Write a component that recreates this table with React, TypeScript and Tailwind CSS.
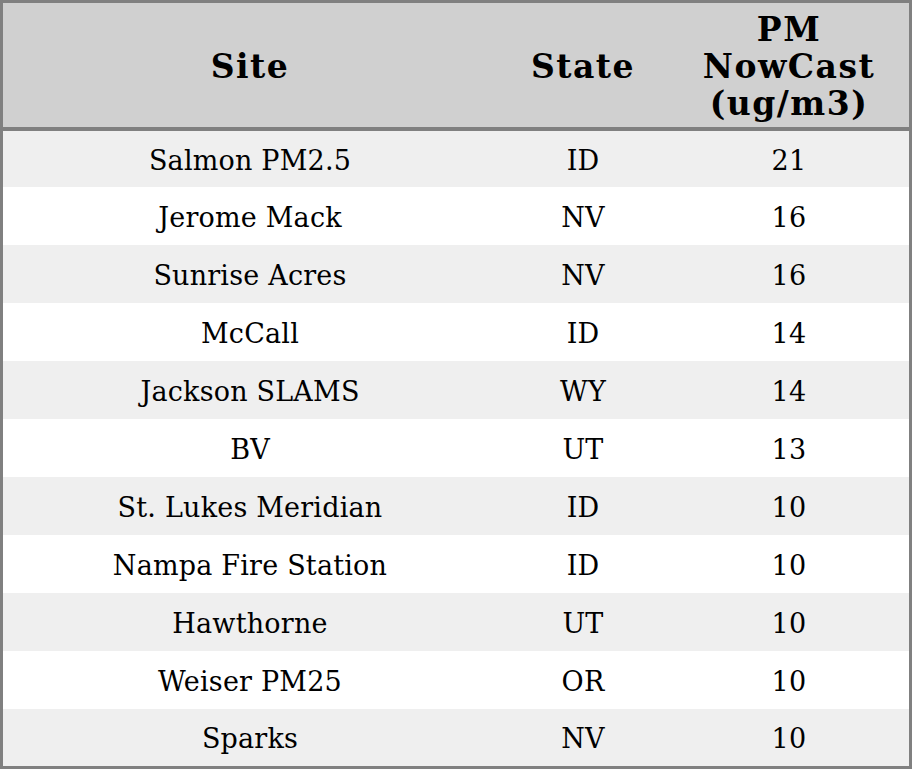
import React from "react";

const rows: { site: string; state: string; pm: number }[] = [
  { site: "Salmon PM2.5", state: "ID", pm: 21 },
  { site: "Jerome Mack", state: "NV", pm: 16 },
  { site: "Sunrise Acres", state: "NV", pm: 16 },
  { site: "McCall", state: "ID", pm: 14 },
  { site: "Jackson SLAMS", state: "WY", pm: 14 },
  { site: "BV", state: "UT", pm: 13 },
  { site: "St. Lukes Meridian", state: "ID", pm: 10 },
  { site: "Nampa Fire Station", state: "ID", pm: 10 },
  { site: "Hawthorne", state: "UT", pm: 10 },
  { site: "Weiser PM25", state: "OR", pm: 10 },
  { site: "Sparks", state: "NV", pm: 10 },
];

export default function App() {
  return (
    <main className="w-[912px] h-[769px] bg-white font-['DejaVu_Serif',serif] text-black">
      <div className="w-[912px] h-[769px] border-[3px] border-[#808080] box-border flex flex-col">
        <div className="grid grid-cols-[494px_172px_240px] h-[128px] shrink-0 bg-[#d0d0d0] border-b-4 border-[#808080] text-[33px] font-bold leading-[37px] tracking-[1.5px] pt-[3px]">
          <div className="flex items-center justify-center text-center">Site</div>
          <div className="flex items-center justify-center text-center">State</div>
          <div className="flex items-center justify-center text-center px-4">PM NowCast (ug/m3)</div>
        </div>
        {rows.map((r, i) => (
          <div
            key={r.site}
            className={
              "grid grid-cols-[494px_172px_240px] shrink-0 text-[27px] tracking-[0.2px] items-center text-center pt-1 " +
              (i % 2 === 0 ? "bg-[#efefef] " : "bg-white ") +
              (i === 0 ? "h-[56px]" : i === rows.length - 1 ? "h-[57px]" : "h-[58px]")
            }
          >
            <div>{r.site}</div>
            <div>{r.state}</div>
            <div>{r.pm}</div>
          </div>
        ))}
      </div>
    </main>
  );
}
